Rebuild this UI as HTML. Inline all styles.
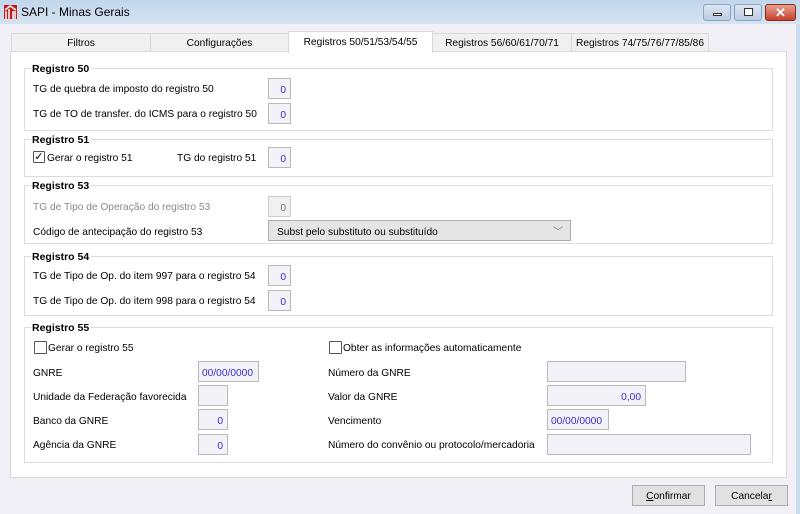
<!DOCTYPE html>
<html><head><meta charset="utf-8"><style>
*{box-sizing:border-box;margin:0;padding:0}
body{width:800px;height:514px;overflow:hidden;background:#c9dbee;font-family:"Liberation Sans",sans-serif;font-size:10.2px;color:#000;position:relative}
.a{position:absolute}
#title{left:0;top:0;width:800px;height:24px;background:linear-gradient(#c2d6ec,#d6e3f1)}
#client{left:0;top:24px;width:796px;height:490px;background:#f0f0f6}
.tab{position:absolute;top:33px;height:19px;background:#f0f0f0;border:1px solid #d9d9d9;border-bottom:none;text-align:center;line-height:19px;white-space:nowrap}
#panel{left:10px;top:51px;width:777px;height:427px;background:#fff;border:1px solid #d9d9d9}
.grp{position:absolute;left:24px;width:749px;border:1px solid #dcdcdc}
.gt{position:absolute;font-weight:bold;background:#fff;padding:0 2px 0 1px;left:31px;font-size:10.5px}
.lbl{position:absolute;white-space:nowrap;margin-top:2px}
.in{position:absolute;background:#f2f2f8;border:1px solid #b9b9b9;color:#3a2ecf;text-align:right;padding-right:4px;line-height:23px;height:21px;white-space:nowrap;overflow:hidden}
.cb{position:absolute;width:12px;height:12px;border:1px solid #555;background:#fff;border-radius:1px}
.btn{position:absolute;top:485px;height:21px;width:73px;background:#e1e1e1;border:1px solid #adadad;text-align:center;line-height:21px}
.wb{position:absolute;top:4px;height:17px;border:1px solid #8ea3bd;border-radius:3px;background:linear-gradient(#dde7f3,#b9cbe0)}
</style></head><body>
<div id="title" class="a"></div>
<svg class="a" style="left:4px;top:5px" width="13" height="14" viewBox="0 0 13 14"><rect x="0" y="0" width="13" height="14" fill="#c41a1a"/><path d="M2 14V6M5 14V4M9 14V6M11 14V6M1 5L6 1L12 5" stroke="#fff" stroke-width="1.5" fill="none"/></svg>
<div class="a" style="left:21px;top:5px;font-size:12px">SAPI - Minas Gerais</div>
<div class="wb" style="left:703px;width:28px"><div class="a" style="left:9px;top:8px;width:9px;height:3px;background:#fff;border:1px solid #333"></div></div>
<div class="wb" style="left:734px;width:28px"><div class="a" style="left:9px;top:3px;width:9px;height:8px;border:1px solid #333;background:#fff"></div></div>
<div class="wb" style="left:765px;width:31px;background:linear-gradient(#e6a190,#c7412c);border-color:#8a2a1c;color:#fff;text-align:center;font-weight:bold;font-size:13px;line-height:15px">✕</div>
<div id="client" class="a"></div>
<div class="tab" style="left:11px;width:140px">Filtros</div>
<div class="tab" style="left:150px;width:139px">Configurações</div>
<div class="tab" style="left:571px;width:138px">Registros 74/75/76/77/85/86</div>
<div class="tab" style="left:432px;width:140px">Registros 56/60/61/70/71</div>
<div id="panel" class="a"></div>
<div class="tab" style="left:288px;top:31px;width:145px;height:22px;background:#fff;line-height:21px;z-index:2">Registros 50/51/53/54/55</div>

<div class="grp" style="top:68px;height:63px"></div><div class="gt" style="top:63px">Registro 50</div>
<div class="lbl" style="left:33px;top:82px">TG de quebra de imposto do registro 50</div><div class="in" style="left:268px;top:78px;width:23px">0</div>
<div class="lbl" style="left:33px;top:107px">TG de TO de transfer. do ICMS para o registro 50</div><div class="in" style="left:268px;top:103px;width:23px">0</div>

<div class="grp" style="top:139px;height:38px"></div><div class="gt" style="top:134px">Registro 51</div>
<div class="cb" style="left:33px;top:151px;font-size:11px;line-height:10px;text-align:center">✓</div><div class="lbl" style="left:47px;top:151px">Gerar o registro 51</div>
<div class="lbl" style="left:177px;top:151px">TG do registro 51</div><div class="in" style="left:268px;top:147px;width:23px">0</div>

<div class="grp" style="top:185px;height:59px"></div><div class="gt" style="top:180px">Registro 53</div>
<div class="lbl" style="left:33px;top:200px;color:#8a8a8a">TG de Tipo de Operação do registro 53</div><div class="in" style="left:268px;top:196px;width:23px;color:#777;background:#f0f0f0;border-color:#ccc">0</div>
<div class="lbl" style="left:33px;top:225px">Código de antecipação do registro 53</div>
<div class="in" style="left:268px;top:220px;width:303px;background:#e5e5e5;color:#000;text-align:left;padding-left:8px;border-color:#adadad">Subst pelo substituto ou substituído<span style="position:absolute;right:7px;top:0;color:#777">﹀</span></div>

<div class="grp" style="top:256px;height:60px"></div><div class="gt" style="top:251px">Registro 54</div>
<div class="lbl" style="left:33px;top:269px">TG de Tipo de Op. do item 997 para o registro 54</div><div class="in" style="left:268px;top:265px;width:23px">0</div>
<div class="lbl" style="left:33px;top:294px">TG de Tipo de Op. do item 998 para o registro 54</div><div class="in" style="left:268px;top:290px;width:23px">0</div>

<div class="grp" style="top:327px;height:136px"></div><div class="gt" style="top:322px">Registro 55</div>
<div class="cb" style="left:34px;top:341px;width:13px;height:13px"></div><div class="lbl" style="left:48px;top:341px">Gerar o registro 55</div>
<div class="cb" style="left:329px;top:341px;width:13px;height:13px"></div><div class="lbl" style="left:343px;top:341px">Obter as informações automaticamente</div>
<div class="lbl" style="left:33px;top:366px">GNRE</div><div class="in" style="left:198px;top:361px;width:61px;text-align:left;padding-left:3px">00/00/0000</div>
<div class="lbl" style="left:33px;top:390px">Unidade da Federação favorecida</div><div class="in" style="left:198px;top:385px;width:30px"></div>
<div class="lbl" style="left:33px;top:414px">Banco da GNRE</div><div class="in" style="left:198px;top:409px;width:30px">0</div>
<div class="lbl" style="left:33px;top:438px">Agência da GNRE</div><div class="in" style="left:198px;top:434px;width:30px">0</div>
<div class="lbl" style="left:328px;top:366px">Número da GNRE</div><div class="in" style="left:547px;top:361px;width:139px"></div>
<div class="lbl" style="left:328px;top:390px">Valor da GNRE</div><div class="in" style="left:547px;top:385px;width:99px">0,00</div>
<div class="lbl" style="left:328px;top:414px">Vencimento</div><div class="in" style="left:547px;top:409px;width:62px;text-align:left;padding-left:3px">00/00/0000</div>
<div class="lbl" style="left:328px;top:438px">Número do convênio ou protocolo/mercadoria</div><div class="in" style="left:547px;top:434px;width:204px"></div>

<div class="btn" style="left:632px"><u>C</u>onfirmar</div>
<div class="btn" style="left:715px">Cancela<u>r</u></div>
</body></html>
